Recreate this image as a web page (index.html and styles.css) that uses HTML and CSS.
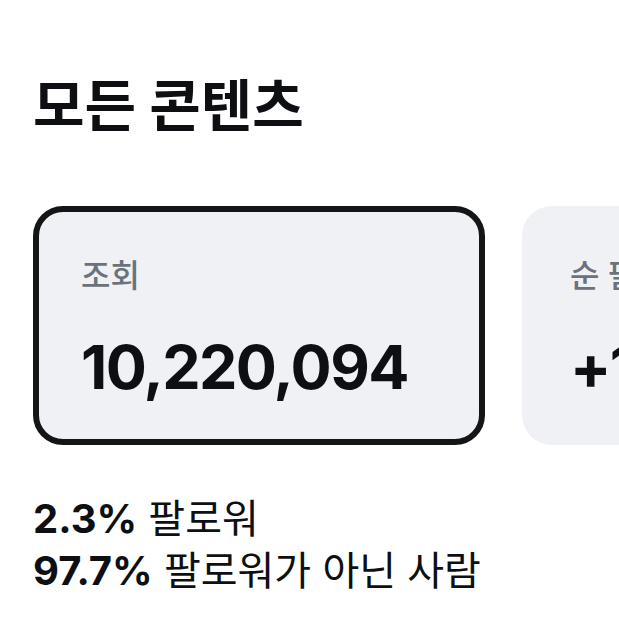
FILE: index.html
```html
<!DOCTYPE html>
<html lang="ko">
<head>
<meta charset="utf-8">
<link rel="stylesheet" href="styles.css">
</head>
<body>
<main class="page">
  <h1 class="title">모든 콘텐츠</h1>
  <div class="cards">
    <div class="card card-active">
      <div class="card-label">조회</div>
      <div class="card-value">10,220,094</div>
    </div>
    <div class="card">
      <div class="card-label">순 팔로워</div>
      <div class="card-value">+1,204</div>
    </div>
  </div>
  <div class="stats">
    <div class="stat"><b class="pct">2.3%</b> 팔로워</div>
    <div class="stat"><b class="pct">97.7%</b> 팔로워가 아닌 사람</div>
  </div>
</main>
</body>
</html>
```
FILE: styles.css
```css
html, body {
  margin: 0;
  padding: 0;
  background: #ffffff;
}
body {
  width: 619px;
  height: 619px;
  overflow: hidden;
  font-family: Inter, "Noto Sans CJK KR", sans-serif;
  color: #0d0f12;
}
.page {
  padding: 68px 0 0 33px;
}
.title {
  margin: 0;
  font-size: 56px;
  font-weight: 700;
  line-height: 76px;
  letter-spacing: 0;
}
.cards {
  display: flex;
  gap: 37px;
  margin-top: 62px;
  overflow: hidden;
}
.card {
  flex: 0 0 auto;
  box-sizing: border-box;
  width: 452px;
  height: 239px;
  border-radius: 30px;
  border: 6px solid transparent;
  background: #eff1f5;
  padding: 43px 42px 0 42px;
}
.card-active {
  border-color: #141517;
}
.card-label {
  font-size: 32px;
  line-height: 42px;
  color: #6c727b;
  font-weight: 500;
}
.card-value {
  margin-top: 34px;
  font-size: 61px;
  line-height: 72px;
  font-weight: 700;
  letter-spacing: -1.6px;
  white-space: nowrap;
}
.stats {
  margin-top: 48px;
}
.stat {
  font-size: 40px;
  line-height: 52px;
  font-weight: 400;
  white-space: nowrap;
  letter-spacing: 0;
}
.pct {
  font-weight: 700;
}
```
